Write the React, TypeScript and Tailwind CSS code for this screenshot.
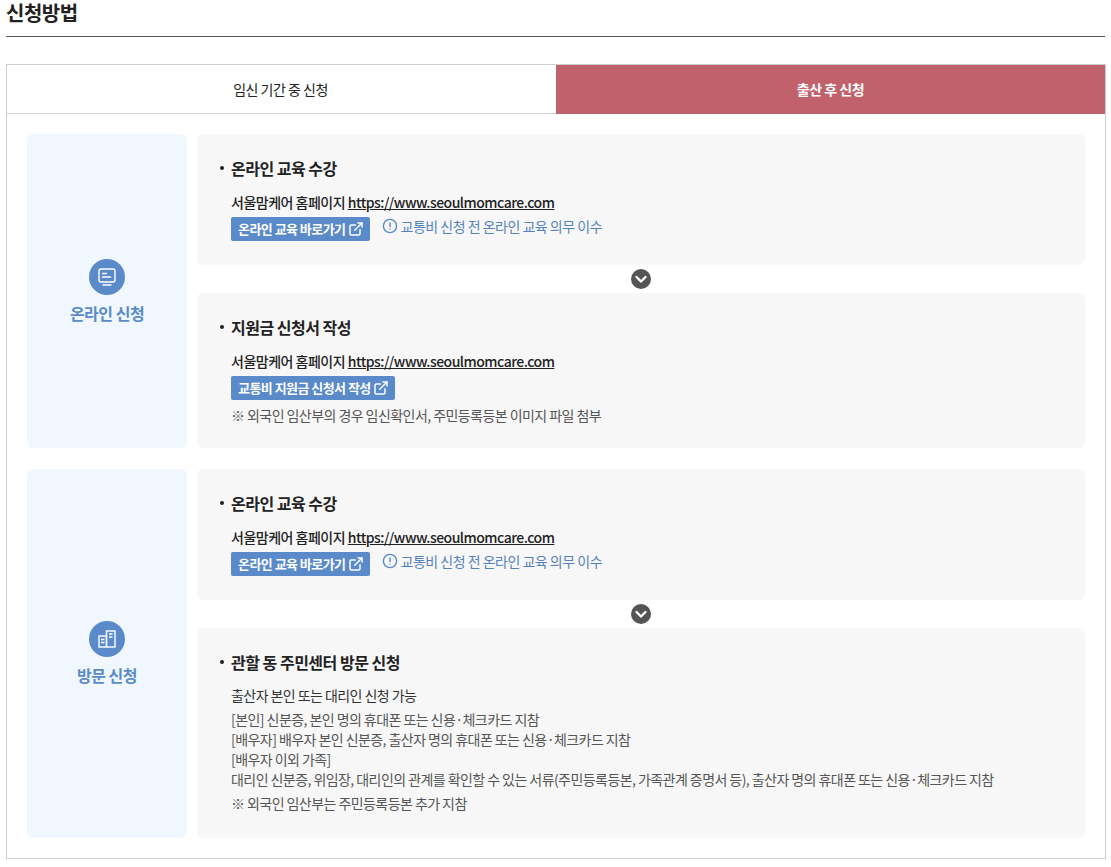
import type { ReactNode } from "react";
import { ExternalLink } from "lucide-react";

const font = { fontFamily: '"Noto Sans CJK KR", "Noto Sans", sans-serif' };

function Chevron() {
  return (
    <div className="h-[28px] flex items-center justify-center">
      <svg width="20" height="20" viewBox="0 0 20 20">
        <circle cx="10" cy="10" r="10" fill="#555555" />
        <path d="M5.5 8l4.5 4.5L14.5 8" fill="none" stroke="#fff" strokeWidth="2.4" strokeLinecap="round" strokeLinejoin="round" />
      </svg>
    </div>
  );
}

function CardTitle({ children }: { children: string }) {
  return (
    <div className="flex items-center h-[24px] text-[16px] font-bold text-[#222] tracking-[-0.5px]">
      <span className="w-[4px] h-[4px] rounded-full bg-[#222] ml-[23px] mr-[7px]" />
      {children}
    </div>
  );
}

function SiteLine() {
  return (
    <p className="ml-[34px] mt-[11px] h-[22px] leading-[22px] text-[14px] font-medium text-[#222] tracking-[-0.5px]">
      서울맘케어 홈페이지 <span className="underline">https://www.seoulmomcare.com</span>
    </p>
  );
}

function BlueButton({ label }: { label: string }) {
  return (
    <span className="inline-flex items-center h-[24px] pl-[7px] pr-[6px] gap-[2px] rounded-[2px] bg-[#5a8ac9] text-white text-[13px] font-bold tracking-[-0.55px]">
      {label}
      <ExternalLink size={16} strokeWidth={2.2} />
    </span>
  );
}

function EducationCard() {
  return (
    <div className="h-[131px] rounded-[6px] bg-[#f7f7f7] pt-[22px]">
      <CardTitle>온라인 교육 수강</CardTitle>
      <SiteLine />
      <div className="ml-[34px] mt-[4px] flex items-start">
        <BlueButton label="온라인 교육 바로가기" />
        <svg className="ml-[12px] mt-[1px]" width="16" height="16" viewBox="0 0 16 16" fill="none">
          <circle cx="8" cy="8" r="6.6" stroke="#5a8ac9" strokeWidth="1.4" />
          <path d="M8 4.4v4.6M8 10.4v1.2" stroke="#5a8ac9" strokeWidth="1.5" />
        </svg>
        <span className="ml-[3px] text-[14px] leading-[18px] text-[#5582bd] tracking-[-0.5px]">
          교통비 신청 전 온라인 교육 의무 이수
        </span>
      </div>
    </div>
  );
}

function SideLabel({ label, className, children }: { label: string; className?: string; children: ReactNode }) {
  return (
    <div className={`w-[160px] shrink-0 rounded-[6px] bg-[#f0f7ff] flex flex-col items-center justify-center ${className ?? ""}`}>
      <div className="mt-[1px] w-[36px] h-[36px] rounded-full bg-[#5a8ac9] flex items-center justify-center">
        {children}
      </div>
      <p className="mt-[7px] text-[16px] font-bold leading-[22px] text-[#5a8ac9] tracking-[-0.5px]">{label}</p>
    </div>
  );
}

export default function App() {
  return (
    <div style={font} className="w-[1111px] h-[867px] bg-white overflow-hidden px-[6px]">
      <div className="h-[37px] border-b border-[#555]">
        <h2 className="text-[20px] leading-[26px] font-bold text-[#222] tracking-[-0.5px]">신청방법</h2>
      </div>

      <div className="mt-[27px] w-[1100px] h-[795px] border border-[#cfcfcf]">
        <div className="flex h-[49px] border-b border-[#d4d4d4]">
          <div className="w-[549px] pr-[2px] flex items-center justify-center text-[14px] text-[#222] tracking-[-0.5px]">
            임신 기간 중 신청
          </div>
          <div className="flex-1 -mb-px flex items-center justify-center bg-[#c1616b] text-white text-[14px] font-bold tracking-[-0.5px]">
            출산 후 신청
          </div>
        </div>

        <div className="px-[20px] pt-[20px] flex flex-col gap-[21px]">
          <div className="flex gap-[10px] h-[314px]">
            <SideLabel label="온라인 신청">
              <svg width="22" height="22" viewBox="0 0 22 22" fill="none" stroke="#fff" strokeWidth="1.4" strokeLinecap="round">
                <rect x="3" y="3" width="16" height="13" rx="2" />
                <path d="M6.5 7.5h4M6.5 11h8M7 19h8" />
              </svg>
            </SideLabel>
            <div className="flex-1">
              <EducationCard />
              <Chevron />
              <div className="h-[155px] rounded-[6px] bg-[#f7f7f7] pt-[22px]">
                <CardTitle>지원금 신청서 작성</CardTitle>
                <SiteLine />
                <div className="ml-[34px] mt-[2px]">
                  <BlueButton label="교통비 지원금 신청서 작성" />
                </div>
                <p className="ml-[34px] mt-[5px] text-[14px] leading-[20px] text-[#555] tracking-[-0.56px]">
                  ※ 외국인 임산부의 경우 임신확인서, 주민등록등본 이미지 파일 첨부
                </p>
              </div>
            </div>
          </div>

          <div className="flex gap-[10px] h-[369px]">
            <SideLabel label="방문 신청" className="pb-[2px]">
              <svg width="22" height="22" viewBox="0 0 22 22" fill="none" stroke="#fff" strokeWidth="1.4">
                <rect x="3" y="8" width="7.5" height="11" />
                <rect x="10.5" y="3" width="8.5" height="16" />
                <path d="M5 11.5h3.5M5 14.5h3.5M13 6h3.5M13 9h3.5" />
              </svg>
            </SideLabel>
            <div className="flex-1">
              <EducationCard />
              <Chevron />
              <div className="h-[210px] rounded-[6px] bg-[#f7f7f7] pt-[22px]">
                <CardTitle>관할 동 주민센터 방문 신청</CardTitle>
                <p className="ml-[34px] mt-[11px] text-[14px] leading-[20px] text-[#333] tracking-[-0.56px]">
                  출산자 본인 또는 대리인 신청 가능
                </p>
                <div className="ml-[34px] mt-[4px] text-[14px] leading-[20px] text-[#555] tracking-[-0.56px]">
                  <p>[본인] 신분증, 본인 명의 휴대폰 또는 신용·체크카드 지참</p>
                  <p>[배우자] 배우자 본인 신분증, 출산자 명의 휴대폰 또는 신용·체크카드 지참</p>
                  <p>[배우자 이외 가족]</p>
                  <p>대리인 신분증, 위임장, 대리인의 관계를 확인할 수 있는 서류(주민등록등본, 가족관계 증명서 등), 출산자 명의 휴대폰 또는 신용·체크카드 지참</p>
                  <p className="mt-[4px]">※ 외국인 임산부는 주민등록등본 추가 지참</p>
                </div>
              </div>
            </div>
          </div>
        </div>
      </div>
    </div>
  );
}
